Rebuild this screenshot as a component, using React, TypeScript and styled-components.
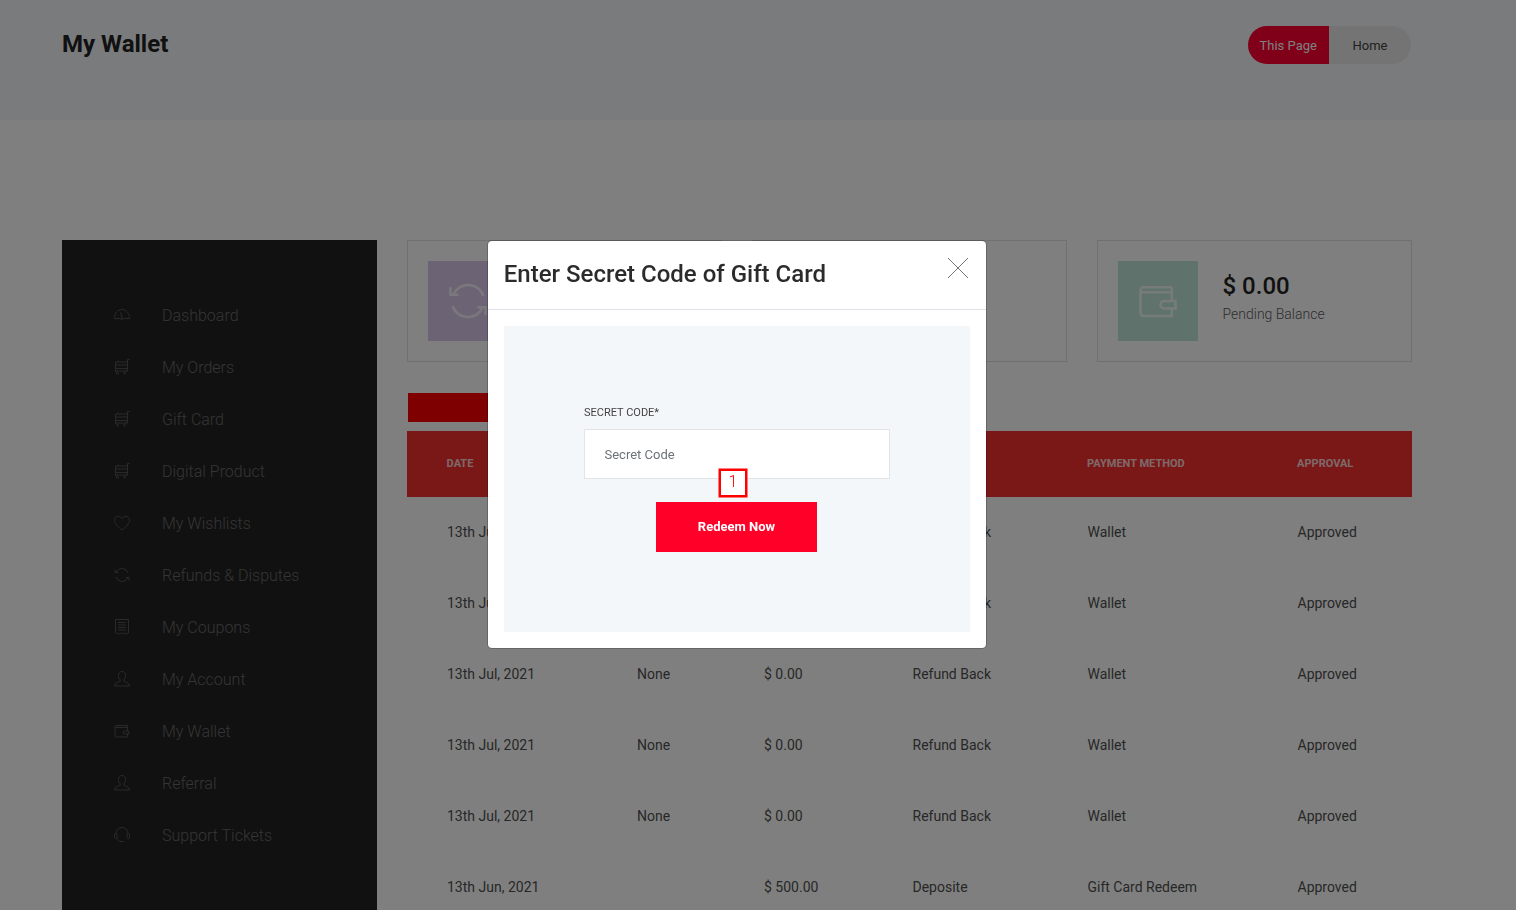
import styled, { createGlobalStyle } from 'styled-components'

const GlobalStyle = createGlobalStyle`
  html, body {
    margin: 0;
    height: 100%;
    overflow: hidden;
    background: #ffffff;
    font-family: Roboto, "Liberation Sans", sans-serif;
  }
  * {
    box-sizing: border-box;
  }
`

const Page = styled.div`
  height: 910px;
  overflow: hidden;
`

const TopBar = styled.header`
  height: 120px;
  background: #f4f7f9;
  padding: 26px 105px 0 62px;
  display: flex;
  justify-content: space-between;
  align-items: flex-start;
`

const PageTitle = styled.h1`
  margin: 0;
  font-size: 24px;
  line-height: 36px;
  font-weight: 700;
  color: #222222;
`

const Crumbs = styled.div`
  display: flex;
  height: 38px;
  width: 163px;
  border-radius: 19px;
  overflow: hidden;
  background: #e8e8e8;
`

const Crumb = styled.a<{ $active?: boolean }>`
  display: flex;
  align-items: center;
  height: 100%;
  font-size: 13px;
  padding: ${p => (p.$active ? '0 0 0 11.5px' : '0 0 0 23.5px')};
  width: ${p => (p.$active ? '81px' : '82px')};
  background: ${p => (p.$active ? '#ff0030' : 'transparent')};
  color: ${p => (p.$active ? '#ffffff' : '#414141')};
`

const Content = styled.div`
  display: flex;
  gap: 30px;
  padding: 120px 104px 0 62px;
`

const Sidebar = styled.aside`
  width: 315px;
  height: 700px;
  flex: none;
  background: #222222;
  padding: 49px 0 0 52px;
`

const NavItem = styled.a`
  display: flex;
  align-items: center;
  height: 52px;
  gap: 32px;
  font-size: 16px;
  font-weight: 300;
  color: #6a6a6a;
`

const NavIcon = styled.svg`
  width: 16px;
  height: 16px;
  flex: none;
  fill: none;
  stroke: #555555;
  stroke-width: 1;
`

const Main = styled.main`
  flex: 1;
  min-width: 0;
`

const Stats = styled.div`
  display: grid;
  grid-template-columns: repeat(3, 315px);
  gap: 30px;
`

const StatCard = styled.div`
  height: 122px;
  border: 1px solid #e1e1e1;
  padding: 20px;
  display: flex;
  gap: 24.5px;
  align-items: center;
`

const StatIcon = styled.div<{ $bg: string }>`
  width: 80px;
  height: 80px;
  flex: none;
  display: flex;
  align-items: center;
  justify-content: center;
  background: ${p => p.$bg};
  svg {
    width: 40px;
    height: 40px;
    fill: none;
    stroke: #ffffff;
    stroke-width: 1;
    opacity: 0.75;
  }
`

const StatText = styled.div`
  padding-bottom: 4px;
`

const StatValue = styled.div`
  font-size: 24px;
  line-height: 30px;
  font-weight: 500;
  color: #222222;
`

const StatLabel = styled.div`
  font-size: 14px;
  line-height: 26px;
  font-weight: 300;
  color: #5c5c5c;
`

const RedeemBar = styled.button`
  display: block;
  width: 170px;
  height: 29px;
  margin: 31px 0 9px 1px;
  border: 0;
  background: #ff0000;
  color: #ffffff;
`

const TableHead = styled.div`
  display: grid;
  grid-template-columns: 190px 127px 148.5px 175px 210px 115px;
  height: 66px;
  padding: 0 0 2px 39.6px;
  align-items: center;
  background: #f43030;
  font-size: 11px;
  font-weight: 700;
  color: rgba(255, 255, 255, 0.8);
`

const Row = styled.div`
  display: grid;
  grid-template-columns: 190px 127px 148.5px 175px 210px 115px;
  height: 71px;
  padding: 0 0 2px 40px;
  align-items: center;
  font-size: 14px;
  color: #4f4f4f;
`

const Overlay = styled.div`
  position: fixed;
  inset: 0;
  background: rgba(0, 0, 0, 0.5);
`

const Modal = styled.div`
  position: absolute;
  left: 487px;
  top: 240px;
  width: 500px;
  height: 409px;
  background: #ffffff;
  border: 1px solid rgba(0, 0, 0, 0.2);
  background-clip: padding-box;
  border-radius: 5px;
  display: flex;
  flex-direction: column;
`

const ModalHeader = styled.div`
  height: 69px;
  flex: none;
  border-bottom: 1px solid #dee2e6;
  display: flex;
  justify-content: space-between;
  padding: 16px 17px 0 15.8px;
`

const ModalTitle = styled.h5`
  margin: 0;
  font-size: 24px;
  line-height: 34px;
  font-weight: 500;
  color: #2b2b2b;
`

const CloseIcon = styled.svg`
  width: 22px;
  height: 22px;
  fill: none;
  stroke: #777777;
  stroke-width: 1;
`

const ModalBody = styled.div`
  flex: 1;
  padding: 16px;
  display: flex;
`

const FormPanel = styled.form`
  flex: 1;
  background: #f4f7f9;
  padding: 78px 80px 0;
  position: relative;
`

const FieldLabel = styled.label`
  display: block;
  font-size: 11px;
  line-height: 16px;
  padding-top: 1px;
  height: 25px;
  color: #444444;
`

const CodeInput = styled.input`
  display: block;
  width: 100%;
  height: 50px;
  border: 1px solid #e1e5e8;
  background: #ffffff;
  padding: 0 19.5px;
  font-family: inherit;
  font-size: 13px;
  outline: none;
  &::placeholder {
    color: #6e7378;
    opacity: 1;
  }
`

const RedeemButton = styled.button`
  display: block;
  width: 161px;
  height: 50px;
  margin: 23px 0 0 72px;
  padding: 0 0 2px;
  border: 0;
  background: #ff0028;
  color: #ffffff;
  font-family: inherit;
  font-size: 13px;
  font-weight: 700;
`

const Marker = styled.span`
  position: absolute;
  left: 215px;
  top: 143px;
  width: 28px;
  height: 28px;
  border: 2px solid #ff0000;
  box-shadow: 0 0 0 0.5px #ff0000;
  background: #ffffff;
  color: #ff0000;
  font-size: 16px;
  font-weight: 300;
  line-height: 22px;
  text-align: center;
`

const icons: Record<string, JSX.Element> = {
  gauge: (
    <>
      <path d="M.5 11.500C.5 6 3.800 2.500 8 2.500s7.500 3.500 7.500 9H10.300M5.700 11.500H.5" />
      <path d="M8 10.500l-1.700 1.200L8 13.200l1.700-1.500L8 10.500zM8 10.500L6.500 5.500" />
    </>
  ),
  cart: (
    <>
      <path d="M15.500.5H13.500V12H1.500V3H13.500M1.500 6H13.500M1.500 9.500H13.500M4 3V1.500M1.500 12V13M11.500 12V13" />
      <circle cx="3.500" cy="14.300" r="1" />
      <circle cx="10.500" cy="14.300" r="1" />
    </>
  ),
  heart: <path d="M8 15C3 11 .5 8.500.5 5.200.5 3 2.200 1.300 4.300 1.300 5.900 1.300 7.200 2.200 8 3.600 8.800 2.200 10.100 1.300 11.700 1.300c2.100 0 3.800 1.700 3.800 3.900C15.500 8.500 13 11 8 15z" />,
  refresh: (
    <>
      <path d="M2.200 5.200A6.500 6.500 0 0 1 14.200 6" />
      <path d="M13.800 10.800A6.500 6.500 0 0 1 1.800 10" />
      <path d="M1 2.500v3h3.200M15 13.500v-3h-3.200" />
    </>
  ),
  receipt: (
    <>
      <path d="M1.500.5h13v13.500l-1.300 1.200-1.300-1.200-1.300 1.200-1.300-1.200-1.300 1.200-1.300-1.200-1.300 1.200-1.300-1.200-1.300 1.200-1.300-1.200z" />
      <path d="M4 3.500h8M4 6h8M4 8.500h8M4 11h8" />
    </>
  ),
  user: (
    <path d="M8 .5c2.300 0 3.600 1.700 3.600 3.800 0 2-1 3.600-1.800 4.400v1.500c1.500.8 5.700 1.700 5.700 4.800H.5c0-3.100 4.200-4 5.700-4.800V8.700C5.400 7.900 4.400 6.300 4.400 4.300 4.400 2.200 5.700.5 8 .5z" />
  ),
  wallet: (
    <>
      <path d="M13.500 2.500H2.200A1.200 1.200 0 0 0 1 3.700v9.100A1.200 1.200 0 0 0 2.200 14H13.500V11M13.500 8V4.500H1.200M13.500 2.500V4.500" />
      <path d="M15 8H10.500a1.500 1.500 0 0 0 0 3H15z" />
    </>
  ),
  headset: (
    <>
      <path d="M2 7V6.500a6 6 0 0 1 12 0V7" />
      <rect x=".5" y="6.500" width="2.500" height="5" rx="1.200" />
      <rect x="13" y="6.500" width="2.500" height="5" rx="1.200" />
      <path d="M3 11.500c.8 2 2.500 3 4 3h2.500" />
    </>
  )
}

const navItems = [
  ['Dashboard', 'gauge'],
  ['My Orders', 'cart'],
  ['Gift Card', 'cart'],
  ['Digital Product', 'cart'],
  ['My Wishlists', 'heart'],
  ['Refunds & Disputes', 'refresh'],
  ['My Coupons', 'receipt'],
  ['My Account', 'user'],
  ['My Wallet', 'wallet'],
  ['Referral', 'user'],
  ['Support Tickets', 'headset']
]

// cells under the modal are left blank, only what shows around it is filled in
const rows = [
  ['13th Jul, 2021', '', '', 'Refund Back', 'Wallet', 'Approved'],
  ['13th Jul, 2021', '', '', 'Refund Back', 'Wallet', 'Approved'],
  ['13th Jul, 2021', 'None', '$ 0.00', 'Refund Back', 'Wallet', 'Approved'],
  ['13th Jul, 2021', 'None', '$ 0.00', 'Refund Back', 'Wallet', 'Approved'],
  ['13th Jul, 2021', 'None', '$ 0.00', 'Refund Back', 'Wallet', 'Approved'],
  ['13th Jun, 2021', '', '$ 500.00', 'Deposite', 'Gift Card Redeem', 'Approved']
]

export default function App() {
  return (
    <Page>
      <GlobalStyle />
      <TopBar>
        <PageTitle>My Wallet</PageTitle>
        <Crumbs>
          <Crumb $active>This Page</Crumb>
          <Crumb>Home</Crumb>
        </Crumbs>
      </TopBar>
      <Content>
        <Sidebar>
          {navItems.map(([label, icon]) => (
            <NavItem key={label}>
              <NavIcon viewBox="0 0 16 16">{icons[icon]}</NavIcon>
              {label}
            </NavItem>
          ))}
        </Sidebar>
        <Main>
          <Stats>
            <StatCard>
              <StatIcon $bg="#d8c8ea">
                <svg viewBox="0 0 16 16">{icons.refresh}</svg>
              </StatIcon>
            </StatCard>
            <StatCard />
            <StatCard>
              <StatIcon $bg="#bfe6d8">
                <svg viewBox="0 0 16 16">{icons.wallet}</svg>
              </StatIcon>
              <StatText>
                <StatValue>$ 0.00</StatValue>
                <StatLabel>Pending Balance</StatLabel>
              </StatText>
            </StatCard>
          </Stats>
          <RedeemBar />
          <TableHead>
            <span>DATE</span>
            <span />
            <span />
            <span />
            <span>PAYMENT METHOD</span>
            <span>APPROVAL</span>
          </TableHead>
          {rows.map((cells, idx) => (
            <Row key={idx}>
              {cells.map((cell, i) => (
                <span key={i}>{cell}</span>
              ))}
            </Row>
          ))}
        </Main>
      </Content>
      <Overlay>
        <Modal>
          <ModalHeader>
            <ModalTitle>Enter Secret Code of Gift Card</ModalTitle>
            <CloseIcon viewBox="0 0 22 22">
              <path d="M1 1l20 20M21 1L1 21" />
            </CloseIcon>
          </ModalHeader>
          <ModalBody>
            <FormPanel>
              <FieldLabel>SECRET CODE*</FieldLabel>
              <CodeInput placeholder="Secret Code" />
              <Marker>1</Marker>
              <RedeemButton type="button">Redeem Now</RedeemButton>
            </FormPanel>
          </ModalBody>
        </Modal>
      </Overlay>
    </Page>
  )
}
